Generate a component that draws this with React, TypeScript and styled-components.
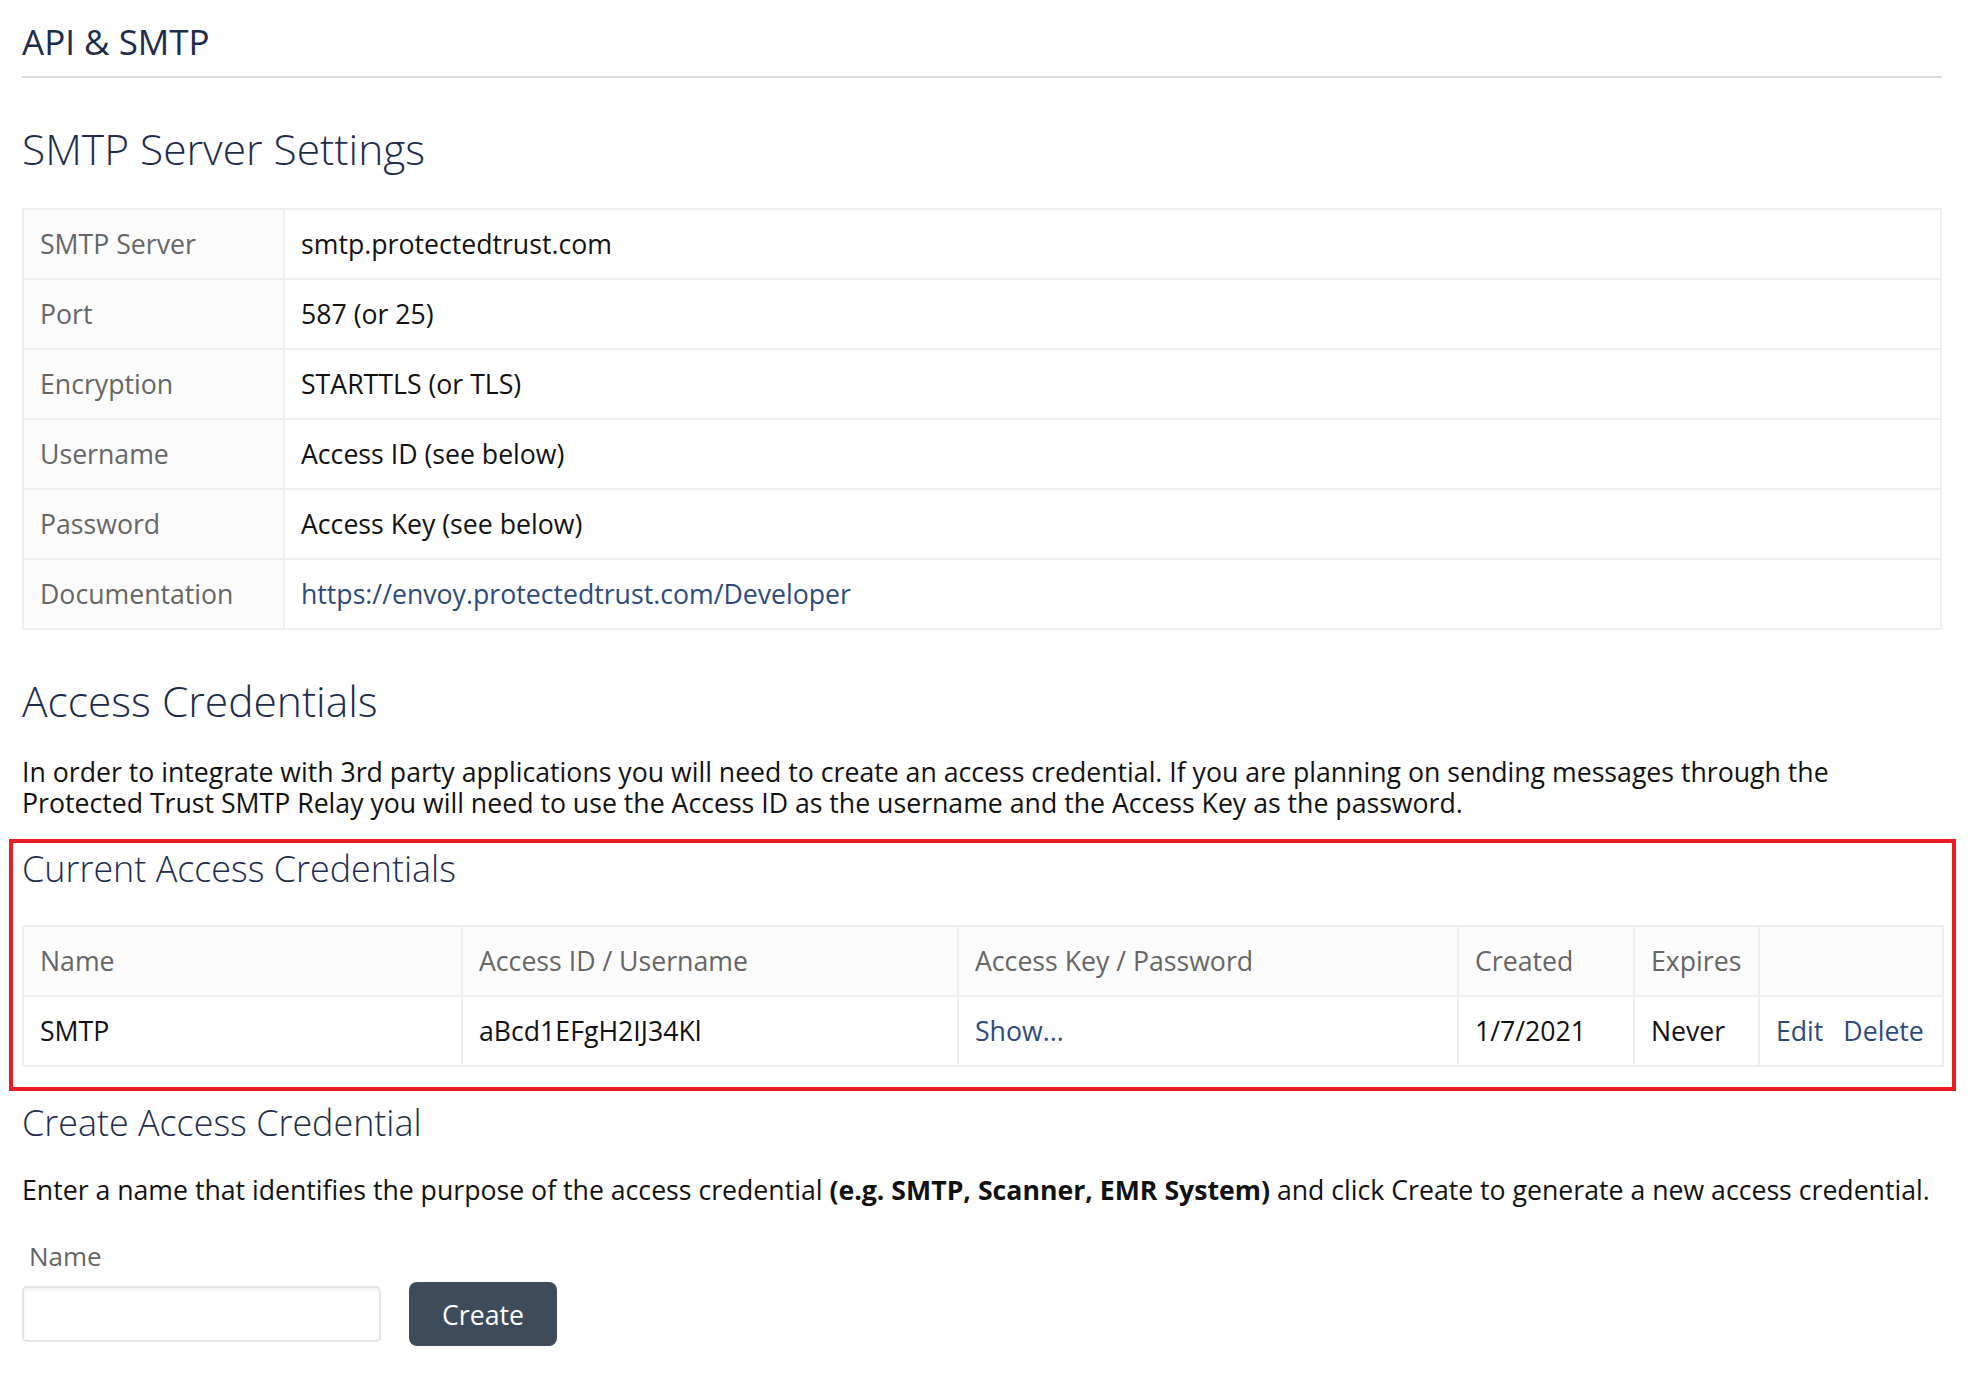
import React from "react";
import styled, { createGlobalStyle } from "styled-components";

const GlobalStyle = createGlobalStyle`
  html, body {
    margin: 0;
    padding: 0;
    background: #fff;
  }
  body {
    font-family: "Open Sans", "Noto Sans", sans-serif;
    font-size: 26.67px;
    color: #111;
  }
  * {
    box-sizing: border-box;
  }
`;

const Page = styled.div`
  padding: 21px 32px 40px 22px;
`;

const PageTitle = styled.h1`
  margin: 0;
  padding-bottom: 13px;
  border-bottom: 2px solid #dddddd;
  font-size: 35px;
  line-height: 42px;
  font-weight: 400;
  color: #1e2c4b;
`;

const SectionTitle = styled.h2<{ $top: number; $bottom: number }>`
  margin: ${(p) => p.$top}px 0 ${(p) => p.$bottom}px;
  font-size: 42.5px;
  line-height: 49px;
  font-weight: 300;
  color: #1e2c4b;
`;

const SubTitle = styled.h3<{ $top: number; $bottom: number }>`
  margin: ${(p) => p.$top}px 0 ${(p) => p.$bottom}px;
  font-size: 35.9px;
  line-height: 41px;
  font-weight: 300;
  color: #1e2c4b;
`;

const Paragraph = styled.p<{ $top: number }>`
  margin: ${(p) => p.$top}px 0 0;
  line-height: 31px;
  color: #111;

  b {
    font-weight: 700;
  }
`;

const Table = styled.table`
  width: 100%;
  border-collapse: collapse;
  table-layout: fixed;
  border: 2px solid #efefef;
`;

const Col = styled.col<{ $w: number }>`
  width: ${(p) => p.$w}px;
`;

const Cell = styled.td<{ $shade?: boolean; $muted?: boolean }>`
  padding: 19px 16px;
  line-height: 30px;
  border: 2px solid #efefef;
  background: ${(p) => (p.$shade ? "#fcfcfc" : "#fff")};
  color: ${(p) => (p.$muted ? "#666" : "#111")};
  white-space: nowrap;
  overflow: hidden;
`;

const HeadCell = styled.th`
  padding: 19px 16px;
  line-height: 30px;
  border: 2px solid #efefef;
  background: #fcfcfc;
  color: #666;
  font-weight: 400;
  text-align: left;
  white-space: nowrap;
`;

const Link = styled.a<{ $gap?: number }>`
  color: #2e4a7a;
  text-decoration: none;
  margin-left: ${(p) => p.$gap || 0}px;
  cursor: pointer;
`;

const Highlight = styled.section`
  margin: 21.5px -14px 0 -13px;
  padding: 4.5px 10px 20px 9px;
  border: 4px solid #ed1c24;
`;

const FieldLabel = styled.label`
  display: block;
  margin: 36px 0 0 7px;
  font-size: 26px;
  line-height: 31px;
  color: #666;
`;

const FormRow = styled.div`
  display: flex;
  align-items: center;
  gap: 28px;
  margin-top: 10px;
`;

const TextInput = styled.input`
  width: 359px;
  height: 56px;
  padding: 0 14px;
  border: 2px solid #e4e4e4;
  border-radius: 5px;
  box-shadow: inset 0 2px 3px rgba(0, 0, 0, 0.05);
  font: inherit;
  outline: none;
`;

const Button = styled.button`
  width: 148px;
  height: 64px;
  border: none;
  border-radius: 8px;
  background: #3e4b5b;
  color: #fff;
  font-family: inherit;
  font-size: 26.67px;
  cursor: pointer;
`;

const settings = [
  ["SMTP Server", "smtp.protectedtrust.com"],
  ["Port", "587 (or 25)"],
  ["Encryption", "STARTTLS (or TLS)"],
  ["Username", "Access ID (see below)"],
  ["Password", "Access Key (see below)"],
];

const credCols = [439, 496, 500, 176, 125, 184];

export default function App() {
  return (
    <>
      <GlobalStyle />
      <Page>
        <PageTitle>API &amp; SMTP</PageTitle>

        <SectionTitle $top={46} $bottom={35}>
          SMTP Server Settings
        </SectionTitle>
        <Table>
          <colgroup>
            <Col $w={261} />
            <col />
          </colgroup>
          <tbody>
            {settings.map(([label, value]) => (
              <tr key={label}>
                <Cell $shade $muted>
                  {label}
                </Cell>
                <Cell>{value}</Cell>
              </tr>
            ))}
            <tr>
              <Cell $shade $muted>
                Documentation
              </Cell>
              <Cell>
                <Link href="#">https://envoy.protectedtrust.com/Developer</Link>
              </Cell>
            </tr>
          </tbody>
        </Table>

        <SectionTitle $top={45.5} $bottom={0}>
          Access Credentials
        </SectionTitle>
        <Paragraph $top={31}>
          In order to integrate with 3rd party applications you will need to
          create an access credential. If you are planning on sending messages
          through the Protected Trust SMTP Relay you will need to use the Access
          ID as the username and the Access Key as the password.
        </Paragraph>

        <Highlight>
          <SubTitle $top={0} $bottom={36.5}>
            Current Access Credentials
          </SubTitle>
          <Table>
            <colgroup>
              {credCols.map((w, i) => (
                <Col key={i} $w={w} />
              ))}
            </colgroup>
            <thead>
              <tr>
                <HeadCell>Name</HeadCell>
                <HeadCell>Access ID / Username</HeadCell>
                <HeadCell>Access Key / Password</HeadCell>
                <HeadCell>Created</HeadCell>
                <HeadCell>Expires</HeadCell>
                <HeadCell />
              </tr>
            </thead>
            <tbody>
              <tr>
                <Cell>SMTP</Cell>
                <Cell>aBcd1EFgH2IJ34Kl</Cell>
                <Cell>
                  <Link href="#">Show...</Link>
                </Cell>
                <Cell>1/7/2021</Cell>
                <Cell>Never</Cell>
                <Cell>
                  <Link href="#">Edit</Link>
                  <Link href="#" $gap={20}>
                    Delete
                  </Link>
                </Cell>
              </tr>
            </tbody>
          </Table>
        </Highlight>

        <SubTitle $top={11} $bottom={0}>
          Create Access Credential
        </SubTitle>
        <Paragraph $top={31}>
          Enter a name that identifies the purpose of the access credential{" "}
          <b>(e.g. SMTP, Scanner, EMR System)</b> and click Create to generate a
          new access credential.
        </Paragraph>

        <FieldLabel htmlFor="cred-name">Name</FieldLabel>
        <FormRow>
          <TextInput id="cred-name" type="text" />
          <Button type="button">Create</Button>
        </FormRow>
      </Page>
    </>
  );
}
